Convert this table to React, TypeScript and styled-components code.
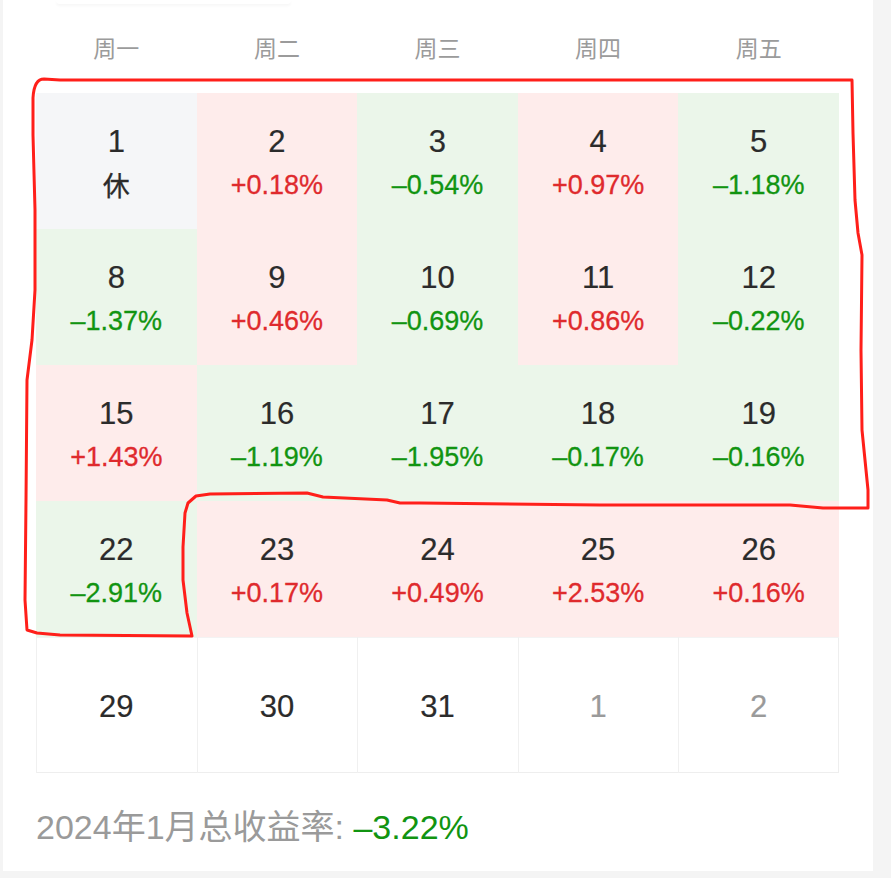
import React from 'react'
import styled, { createGlobalStyle } from 'styled-components'

type Tone = 'up' | 'down' | 'rest' | 'plain' | 'muted'

interface Day {
  date: number
  tone: Tone
  rate?: string
}

const GlobalStyle = createGlobalStyle`
  html, body {
    margin: 0;
    padding: 0;
    background: #f4f4f4;
  }
  body {
    font-family: "Liberation Sans", "Noto Sans CJK SC", sans-serif;
    -webkit-font-smoothing: antialiased;
  }
`

const Page = styled.div`
  position: relative;
  width: 891px;
  height: 878px;
  overflow: hidden;
`

const Panel = styled.div`
  margin-left: 3px;
  width: 870px;
  height: 871px;
  background: #fff;
  display: flex;
  flex-direction: column;
  padding: 0 34px 0 33px;
  box-sizing: border-box;
`

const TabStub = styled.div`
  width: 235px;
  height: 4px;
  margin-left: 20px;
  border-radius: 0 0 4px 4px;
  background: #fff;
  box-shadow: 0 2px 3px rgba(0, 0, 0, 0.035);
`

const WeekHeader = styled.div`
  display: grid;
  grid-template-columns: repeat(5, 1fr);
  height: 89px;
  padding-bottom: 3px;
  box-sizing: border-box;
  align-items: center;
`

const WeekName = styled.div`
  text-align: center;
  font-family: "Noto Sans CJK SC", sans-serif;
  font-size: 23px;
  color: #9b9b9b;
  line-height: 30px;
`

const Grid = styled.div`
  display: grid;
  grid-template-columns: repeat(5, 1fr);
  grid-auto-rows: 136px;
`

const toneBg: Record<Tone, string> = {
  up: '#feeceb',
  down: '#ebf6ea',
  rest: '#f5f6f8',
  plain: '#fff',
  muted: '#fff',
}

const Cell = styled.div<{ $tone: Tone; $last?: boolean }>`
  background: ${({ $tone }) => toneBg[$tone]};
  display: flex;
  flex-direction: column;
  align-items: center;
  justify-content: center;
  gap: 7px;
  padding-top: 4px;
  box-sizing: border-box;
  box-shadow: ${({ $tone, $last }) =>
    $tone === 'plain' || $tone === 'muted'
      ? `inset 1px 0 0 #f0f0f0, inset 0 1px 0 #f3f3f3, inset 0 -1px 0 #eeeeee${$last ? ', inset -1px 0 0 #eeeeee' : ''}`
      : 'none'};
`

const DateNum = styled.div<{ $muted?: boolean }>`
  font-size: 31px;
  line-height: 36px;
  color: ${({ $muted }) => ($muted ? '#9a9a9a' : '#2b2b2b')};
  -webkit-text-stroke: 0.2px currentColor;
`

const Rate = styled.div<{ $tone: Tone }>`
  font-size: 27px;
  line-height: 36px;
  color: ${({ $tone }) => ($tone === 'up' ? '#df2a2d' : $tone === 'down' ? '#119411' : '#2b2b2b')};
  -webkit-text-stroke: 0.3px currentColor;
`

const RestMark = styled.div`
  font-family: "Noto Sans CJK SC", sans-serif;
  font-size: 27px;
  line-height: 36px;
  color: #2b2b2b;
  -webkit-text-stroke: 0.3px currentColor;
`

const Summary = styled.div`
  margin-top: 34px;
  font-size: 34px;
  line-height: 40px;
  color: #9a9a9a;
  white-space: nowrap;
`

const SummaryValue = styled.span`
  color: #119411;
`

const Annotation = styled.svg`
  position: absolute;
  top: 0;
  left: 0;
  pointer-events: none;
`

const weekNames = ['周一', '周二', '周三', '周四', '周五']

const days: Day[] = [
  { date: 1, tone: 'rest', rate: '休' },
  { date: 2, tone: 'up', rate: '+0.18%' },
  { date: 3, tone: 'down', rate: '–0.54%' },
  { date: 4, tone: 'up', rate: '+0.97%' },
  { date: 5, tone: 'down', rate: '–1.18%' },
  { date: 8, tone: 'down', rate: '–1.37%' },
  { date: 9, tone: 'up', rate: '+0.46%' },
  { date: 10, tone: 'down', rate: '–0.69%' },
  { date: 11, tone: 'up', rate: '+0.86%' },
  { date: 12, tone: 'down', rate: '–0.22%' },
  { date: 15, tone: 'up', rate: '+1.43%' },
  { date: 16, tone: 'down', rate: '–1.19%' },
  { date: 17, tone: 'down', rate: '–1.95%' },
  { date: 18, tone: 'down', rate: '–0.17%' },
  { date: 19, tone: 'down', rate: '–0.16%' },
  { date: 22, tone: 'down', rate: '–2.91%' },
  { date: 23, tone: 'up', rate: '+0.17%' },
  { date: 24, tone: 'up', rate: '+0.49%' },
  { date: 25, tone: 'up', rate: '+2.53%' },
  { date: 26, tone: 'up', rate: '+0.16%' },
  { date: 29, tone: 'plain' },
  { date: 30, tone: 'plain' },
  { date: 31, tone: 'plain' },
  { date: 1, tone: 'muted' },
  { date: 2, tone: 'muted' },
]

// hand-drawn marker outline over the calendar
const outline =
  'M 60 80 L 852 80 L 853 133 L 855 200 L 858 233 L 862 255 L 861 350 L 862 430 L 866 470 L 868 490 L 868 508 ' +
  'L 823 508 L 790 505 L 600 505 L 420 503 L 400 503 L 387 500 L 323 497 L 307 493 L 210 494 L 196 496 ' +
  'L 188 503 L 185 513 L 183 547 L 183 580 L 187 613 L 192 636 L 60 635 L 37 633 L 27 630 L 25 600 ' +
  'L 26 500 L 27 380 L 32 340 L 35 290 L 35 210 L 33 135 L 33 98 Q 34 79 44 79 Z'

const App = () => {
  return (
    <Page>
      <GlobalStyle />
      <Panel>
        <TabStub />
        <WeekHeader>
          {weekNames.map((name) => (
            <WeekName key={name}>{name}</WeekName>
          ))}
        </WeekHeader>
        <Grid>
          {days.map((day, i) => (
            <Cell key={i} $tone={day.tone} $last={i % 5 === 4}>
              <DateNum $muted={day.tone === 'muted'}>{day.date}</DateNum>
              {day.tone === 'rest' ? (
                <RestMark>{day.rate}</RestMark>
              ) : (
                day.rate && <Rate $tone={day.tone}>{day.rate}</Rate>
              )}
            </Cell>
          ))}
        </Grid>
        <Summary>
          2024年1月总收益率: <SummaryValue>–3.22%</SummaryValue>
        </Summary>
      </Panel>
      <Annotation width={891} height={878} viewBox="0 0 891 878">
        <path
          d={outline}
          fill="none"
          stroke="#ff1f1a"
          strokeWidth={3}
          strokeLinejoin="round"
          strokeLinecap="round"
        />
      </Annotation>
    </Page>
  )
}

export default App
